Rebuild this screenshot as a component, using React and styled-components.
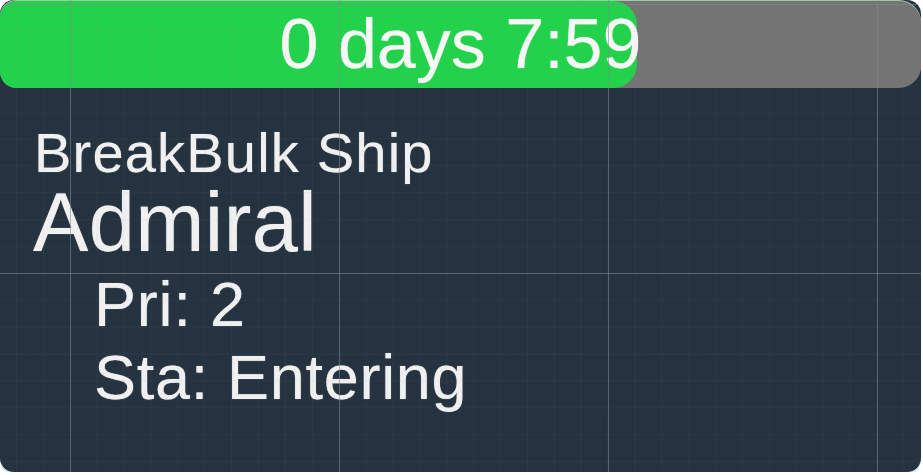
import React from "react";
import styled, { createGlobalStyle } from "styled-components";

const GlobalStyle = createGlobalStyle`
  html, body {
    margin: 0;
    padding: 0;
    background: #ffffff;
  }
  body {
    font-family: "Liberation Sans", Arial, sans-serif;
  }
`;

const Card = styled.div`
  position: relative;
  width: 921px;
  height: 472px;
  background: #253240;
  border-radius: 14px;
  overflow: hidden;
  box-shadow: 0 2px 0 #cfe6f3;
  display: flex;
  flex-direction: column;

  &::after {
    content: "";
    position: absolute;
    inset: 0;
    pointer-events: none;
    background-image:
      linear-gradient(to right, rgba(130, 138, 145, 0.55) 1px, transparent 1px),
      linear-gradient(to bottom, rgba(130, 138, 145, 0.55) 1px, transparent 1px),
      linear-gradient(to right, rgba(128, 140, 150, 0.07) 1px, transparent 1px),
      linear-gradient(to bottom, rgba(128, 140, 150, 0.07) 1px, transparent 1px);
    background-size: 269px 269px, 269px 269px, 26.9px 26.9px, 26.9px 26.9px;
    background-position: 70px 0, 0 4px, 16px 0, 0 4px;
  }
`;

const Track = styled.div`
  position: relative;
  margin-top: 1px;
  height: 87px;
  background: #747474;
  border-radius: 16px 22px 22px 16px;
  box-shadow: 0 -1px 0 #9ec9a9;
  overflow: hidden;
`;

const Fill = styled.div`
  height: 100%;
  background: #23d24b;
  border-radius: 16px 24px 24px 16px;
`;

const TimeText = styled.div`
  position: absolute;
  inset: 0;
  text-align: center;
  font-size: 70px;
  line-height: 87px;
  color: #f7f7f7;
  text-shadow: 0 0 1px rgba(255, 255, 255, 0.6);
  white-space: nowrap;
`;

const Body = styled.div`
  display: flex;
  flex-direction: column;
  padding: 37px 0 0 32px;
  color: #f0f0f0;
  text-shadow: 0 0 1px rgba(255, 255, 255, 0.6);
`;

const Line = styled.div`
  font-size: ${(p) => p.$size}px;
  letter-spacing: ${(p) => p.$track || 0}px;
  line-height: 1;
  margin-top: ${(p) => p.$gap || 0}px;
  margin-left: ${(p) => p.$indent || 0}px;
  white-space: nowrap;
`;

export default function App() {
  const progress = 0.692;
  return (
    <>
      <GlobalStyle />
      <Card>
        <Track>
          <Fill style={{ width: `${progress * 100}%` }} />
          <TimeText>0 days 7:59</TimeText>
        </Track>
        <Body>
          <Line $size={56} $indent={2} $track={1.2}>BreakBulk Ship</Line>
          <Line $size={83} $indent={1} $track={0.4}>Admiral</Line>
          <Line $size={63} $indent={62} $gap={9} $track={0.8}>Pri: 2</Line>
          <Line $size={63} $indent={62} $gap={10} $track={0.7}>Sta: Entering</Line>
        </Body>
      </Card>
    </>
  );
}
